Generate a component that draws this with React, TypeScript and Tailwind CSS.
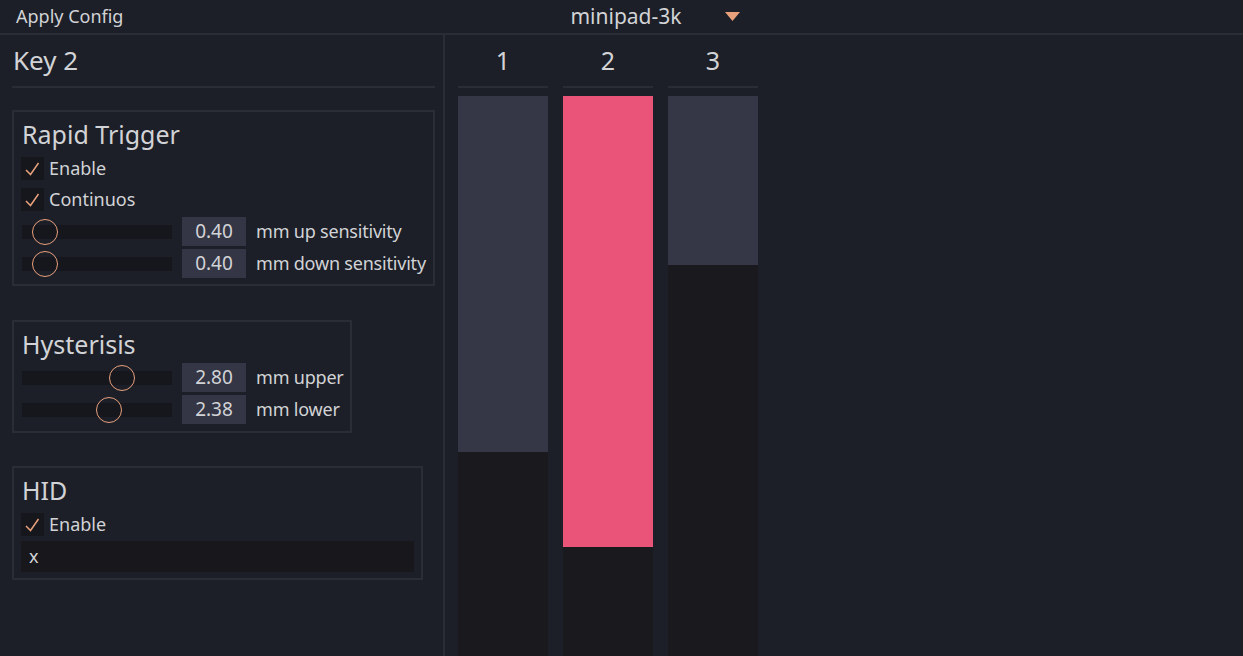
import type { ReactNode } from "react";

const keys = [
  { id: 1, fill: 356, color: "bg-[#363746]" },
  { id: 2, fill: 451, color: "bg-[#ea5479]" },
  { id: 3, fill: 169, color: "bg-[#363746]" },
];

function Checkbox({ label }: { label: string }) {
  return (
    <div className="flex h-[23px] items-center">
      <div className="h-[23px] w-[23px] bg-[#16171c]">
        <svg width="23" height="23" viewBox="0 0 23 23">
          <polyline
            points="5,13 9.5,17.5 17.5,6"
            fill="none"
            stroke="#e8a07c"
            strokeWidth="1.5"
          />
        </svg>
      </div>
      <span className="ml-[5px] whitespace-nowrap text-[18px]">{label}</span>
    </div>
  );
}

function Slider({ value, knob, label }: { value: string; knob: number; label: string }) {
  return (
    <div className="flex h-[29px] items-center">
      <div className="relative ml-[1px] h-[14px] w-[150px] shrink-0 bg-[#16171c]">
        <div
          className="absolute top-1/2 h-[26px] w-[26px] -translate-x-1/2 -translate-y-1/2 rounded-full border-[1.5px] border-[#e8a07c]"
          style={{ left: knob }}
        />
      </div>
      <div className="ml-[10px] flex h-[29px] w-[64px] shrink-0 items-center justify-center bg-[#343645] text-[19px]">
        {value}
      </div>
      <span className="ml-[10px] whitespace-nowrap text-[18px] tracking-[-0.2px]">{label}</span>
    </div>
  );
}

function Group({ title, width, children }: { title: string; width: string; children: ReactNode }) {
  return (
    <div className={`${width} border-2 border-[#2a2d36] px-[7px] pt-[6px]`}>
      <div className="flex h-[34px] items-center whitespace-nowrap pl-[1px] text-[25px]">{title}</div>
      {children}
    </div>
  );
}

export default function App() {
  return (
    <div
      className="flex h-[656px] w-[1243px] flex-col overflow-hidden bg-[#1c1f27] text-[#d2d3d6]"
      style={{ fontFamily: '"Noto Sans", sans-serif' }}
    >
      <div className="flex h-[35px] shrink-0 items-center border-b-2 border-[#2a2d36]">
        <span className="pl-4 text-[18px]">Apply Config</span>
        <div className="ml-auto flex items-center pr-[503px]">
          <span className="w-[170px] text-center text-[21px]">minipad-3k</span>
          <svg width="15" height="9" viewBox="0 0 15 9" className="ml-[14px]">
            <polygon points="0,0 15,0 7.5,9" fill="#e8a07c" />
          </svg>
        </div>
      </div>

      <div className="flex min-h-0 flex-1">
        <div className="w-[445px] shrink-0 border-r-2 border-[#2a2d36] pl-3 pr-[8px]">
          <div className="flex h-[53px] items-center border-b-2 border-[#2a2d36] pl-[1px] text-[26px]">
            Key 2
          </div>

          <div className="mt-[22px]">
            <Group title="Rapid Trigger" width="w-[423px]">
              <div className="mt-[5px] flex flex-col gap-[8px]">
                <Checkbox label="Enable" />
                <Checkbox label="Continuos" />
              </div>
              <div className="mt-[6px] flex flex-col gap-[3px] pb-[6px]">
                <Slider value="0.40" knob={23} label="mm up sensitivity" />
                <Slider value="0.40" knob={23} label="mm down sensitivity" />
              </div>
            </Group>
          </div>

          <div className="mt-[34px]">
            <Group title="Hysterisis" width="w-[340px]">
              <div className="mt-[1px] flex flex-col gap-[3px] pb-[7px]">
                <Slider value="2.80" knob={100} label="mm upper" />
                <Slider value="2.38" knob={87} label="mm lower" />
              </div>
            </Group>
          </div>

          <div className="mt-[33px]">
            <Group title="HID" width="w-[411px]">
              <div className="mt-[5px]">
                <Checkbox label="Enable" />
              </div>
              <div className="mb-[6px] mt-[5px] flex h-[31px] items-center bg-[#17171c] pl-2 text-[18px]">
                x
              </div>
            </Group>
          </div>
        </div>

        <div className="flex gap-[15px] pl-[13px]">
          {keys.map((k) => (
            <div key={k.id} className="flex w-[90px] flex-col">
              <div className="flex h-[53px] items-center justify-center border-b-2 border-[#2a2d36] text-[25px]">
                {k.id}
              </div>
              <div className="mt-[8px] flex h-[560px] flex-col bg-[#19191e]">
                <div className={k.color} style={{ height: k.fill }} />
              </div>
            </div>
          ))}
        </div>
      </div>
    </div>
  );
}
